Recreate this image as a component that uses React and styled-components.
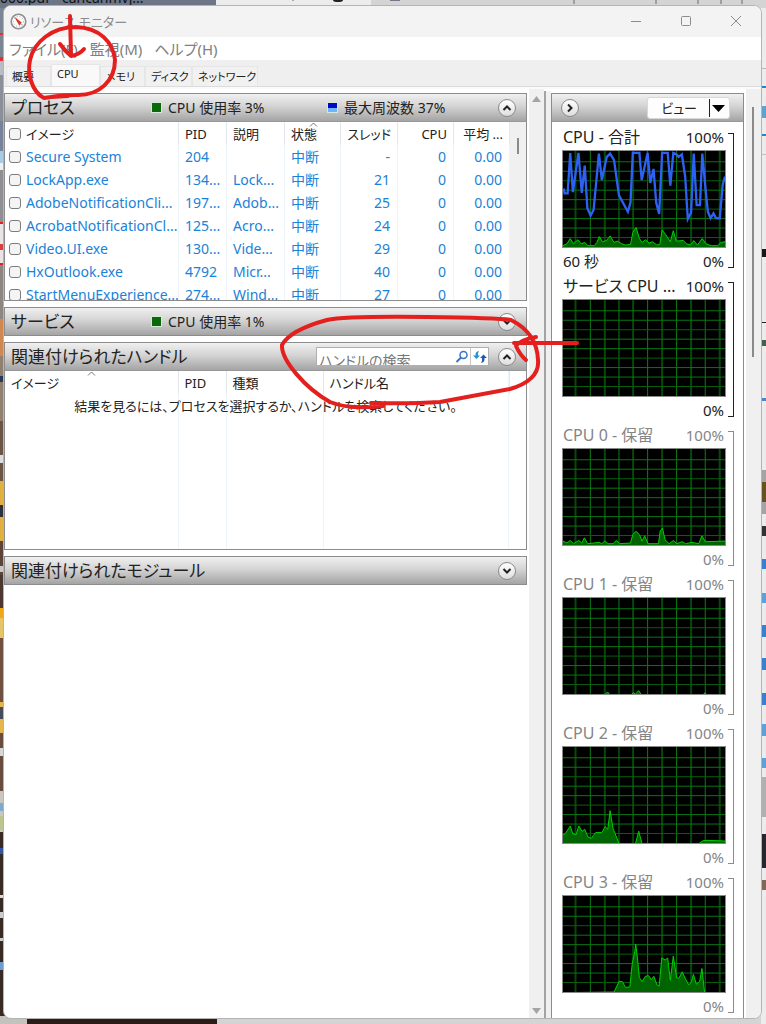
import React, { useState } from 'react';
import styled, { createGlobalStyle } from 'styled-components';

const GlobalStyle = createGlobalStyle`
  * { box-sizing: border-box; }
  body {
    margin: 0;
    overflow: hidden;
    font-family: "Noto Sans", "Noto Sans CJK JP", sans-serif;
    font-size: 13px;
    font-feature-settings: "palt";
    color: #222;
  }
  button, input { font: inherit; color: inherit; font-feature-settings: inherit; }
`;

const Desktop = styled.div`
  position: relative;
  height: 100vh;
  padding: 5px 4px 5px 3px;
  background: #d4d4d4;
`;

const Backdrop = styled.svg`
  position: absolute;
  inset: 0;
  width: 100%;
  height: 100%;
`;

const Markup = styled.svg`
  position: absolute;
  top: 0;
  left: 0;
  pointer-events: none;
`;

const Window = styled.div`
  position: relative;
  height: 100%;
  display: flex;
  flex-direction: column;
  overflow: hidden;
  background: #fff;
  border: 1px solid #b4b4b4;
  border-radius: 8px;
`;

const TitleBar = styled.header`
  display: flex;
  align-items: center;
  flex: none;
  height: 31px;
  padding-left: 6px;
  background: #f3f3f3;
  color: #8c8c8c;
`;

const Title = styled.h1`
  flex: 1;
  margin: 0;
  padding-left: 3px;
  font-size: 13px;
  font-weight: 400;
`;

const WindowButton = styled.button`
  width: 50px;
  height: 30px;
  padding: 0;
  border: 0;
  background: none;
  color: #8c8c8c;
`;

const MenuBar = styled.nav`
  display: flex;
  align-items: center;
  flex: none;
  height: 23px;
  padding-left: 5px;
  gap: 12px;
`;

const MenuItem = styled.button`
  padding: 0;
  border: 0;
  background: none;
  font-size: 15px;
  line-height: 22px;
  color: #808080;
`;

const TabBar = styled.div`
  display: flex;
  align-items: flex-end;
  flex: none;
  height: 26px;
  padding-left: 2px;
  background: #efefef;
`;

const Tab = styled.button`
  min-width: ${p => p.$width}px;
  height: ${p => (p.$active ? 22 : 20)}px;
  padding: 0 0 ${p => (p.$active ? 4 : 0)}px 5px;
  border: 1px solid #e6e6e6;
  border-bottom: 0;
  background: ${p => (p.$active ? '#f9f9f9' : '#f1f1f1')};
  font-size: 11px;
  line-height: 18px;
  text-align: left;
`;

const TabEdge = styled.div`
  flex: none;
  height: 3px;
  border-top: 1px solid #dcdcdc;
  background: #fafafa;
`;

const Main = styled.main`
  display: flex;
  flex: 1;
  min-height: 0;
`;

const Sections = styled.div`
  flex: 1;
  min-width: 0;
  padding: 4px 2px 0 0;
  display: flex;
  flex-direction: column;
  gap: 6px;
`;

const Section = styled.section`
  border: 1px solid #8c8c8c;
`;

const SectionHeader = styled.div`
  display: grid;
  grid-template-columns: ${p => (p.$wide ? '1fr' : '140px 176px 1fr')} auto;
  align-items: center;
  height: 27px;
  padding: 0 10px 0 6px;
  background: linear-gradient(#f0f0f0, #d4d4d4 45%, #a4a4a4);
`;

const SectionTitle = styled.h2`
  margin: 0;
  font-size: 17px;
  line-height: 26px;
  font-weight: 400;
  white-space: nowrap;
`;

const Meter = styled.span`
  display: flex;
  align-items: center;
  gap: 6px;
  font-size: 14px;
  line-height: 20px;
  white-space: nowrap;
`;

const Swatch = styled.i`
  width: 11px;
  height: 11px;
  border: 1px solid #d8e8d8;
  background: ${p => (p.$blue ? 'linear-gradient(#0008c8 60%, #6cb4ff 60%)' : '#0a6a0a')};
`;

const RoundButton = styled.button`
  display: flex;
  align-items: center;
  justify-content: center;
  width: 18px;
  height: 18px;
  padding: 0;
  border: 1px solid #8a8a8a;
  border-radius: 50%;
  background: linear-gradient(#fff, #dedede);
  grid-column: -2;
`;

const SectionBody = styled.div`
  display: flex;
  height: 179px;
  overflow: hidden;
  border-top: 1px solid #999;
`;

const Table = styled.table`
  flex: 1;
  min-width: 0;
  width: 100%;
  table-layout: fixed;
  border-collapse: collapse;
`;

const Th = styled.th`
  position: relative;
  height: 23px;
  padding: 0 6px;
  border-right: 1px solid #e4e8ec;
  font-weight: 400;
  text-align: ${p => (p.$right ? 'right' : 'left')};
  white-space: nowrap;
`;

const Td = styled.td`
  height: 23px;
  padding: 0 7px 0 6px;
  border-right: 1px solid #edf4fa;
  color: #1a82d8;
  font-size: 14px;
  line-height: 20px;
  text-align: ${p => (p.$right ? 'right' : 'left')};
  white-space: nowrap;
  overflow: hidden;
`;

const CheckLabel = styled.label`
  display: flex;
  align-items: center;
  gap: 5px;
  margin: 0 -7px 0 -2px;
  line-height: 20px;
`;

const Check = styled.input`
  appearance: none;
  flex: none;
  width: 12px;
  height: 12px;
  margin: 0;
  border: 1px solid #7c7c7c;
  border-radius: 3px;
  background: #f4f4f4;
  &:checked { background: #1a82d8; }
`;

const SortMark = styled.svg`
  position: absolute;
  top: 0;
  left: 50%;
  margin-left: -4px;
`;

const ListScroll = styled.div`
  flex: none;
  width: 16px;
  padding: 16px 7px;
  background: #f0f0f0;
`;

const Thumb = styled.div`
  width: 2px;
  height: ${p => p.$height}px;
  background: #8a8a8a;
`;

const HandleBody = styled(SectionBody)`
  background:
    linear-gradient(#edf4fa, #edf4fa) calc(100% - 347px) 0 / 1px 100% no-repeat,
    linear-gradient(#edf4fa, #edf4fa) calc(100% - 299px) 0 / 1px 100% no-repeat,
    linear-gradient(#edf4fa, #edf4fa) calc(100% - 202px) 0 / 1px 100% no-repeat,
    linear-gradient(#edf4fa, #edf4fa) calc(100% - 17px) 0 / 1px 100% no-repeat;
  align-items: flex-start;
`;

const Message = styled.td`
  height: 22px;
  padding: 0;
  text-align: center;
  white-space: nowrap;
`;

const Tools = styled.div`
  display: flex;
  align-items: center;
`;

const SearchBox = styled.div`
  display: flex;
  align-items: flex-start;
  width: 173px;
  height: 19px;
  margin-right: 9px;
  overflow: hidden;
  border: 1px solid #b0b0b0;
  background: #fff;
`;

const SearchInput = styled.input`
  flex: 1;
  min-width: 0;
  height: 24px;
  padding: 0 2px;
  border: 0;
  outline: 0;
  background: none;
  font-size: 14px;
  &::placeholder { color: #777; opacity: 1; }
`;

const SearchButton = styled.button`
  width: 18px;
  height: 17px;
  padding: 0;
  border: 0;
  border-left: 1px solid ${p => (p.$divided ? '#c8c8c8' : 'transparent')};
  background: none;
  line-height: 0;
`;

const Gutter = styled.div`
  flex: none;
  display: flex;
  flex-direction: column;
  align-items: center;
  justify-content: space-between;
  width: 15px;
  padding: 7px 0 4px;
  background: #f0f0f0;
`;

const Splitter = styled.div`
  flex: none;
  width: 7px;
  margin-top: 2px;
  border-left: 2px solid #a4a4a4;
  background: #f0f0f0;
`;

const Graphs = styled.aside`
  flex: none;
  width: 193px;
  margin: 4px 2px 0 0;
  overflow: hidden;
  border: 1px solid #8c8c8c;
  border-bottom: 0;
`;

const GraphsHeader = styled.div`
  display: flex;
  align-items: center;
  justify-content: space-between;
  height: 28px;
  padding: 0 13px 0 9px;
  border-bottom: 1px solid #999;
  background: linear-gradient(#f0f0f0, #d4d4d4 45%, #a4a4a4);
`;

const ViewButton = styled.button`
  display: flex;
  align-items: center;
  height: 22px;
  padding: 0 3px 0 13px;
  border: 1px solid #d8d8d8;
  border-radius: 3px;
  background: #fdfdfd;
  svg { margin-left: 11px; }
`;

const GraphList = styled.div`
  padding: 2px 9px 0 10px;
`;

const Graph = styled.figure`
  display: grid;
  grid-template-columns: 1fr 6px;
  column-gap: 2px;
  height: 149px;
  margin: 0;
  color: ${p => (p.$parked ? '#858585' : '#222')};
`;

const GraphCaption = styled.figcaption`
  display: flex;
  justify-content: space-between;
  padding: 0 2px 0 1px;
  font-size: 15px;
  line-height: 26px;
  white-space: nowrap;
`;

const GraphName = styled.span`
  font-size: 16px;
`;

const GraphFoot = styled.div`
  display: flex;
  justify-content: space-between;
  padding: 0 2px 0 1px;
  font-size: 15px;
  line-height: 26px;
`;

const Plot = styled.svg`
  display: block;
  width: 100%;
  height: 98px;
  border: 1px solid #8a8a8a;
  background: #000;
`;

const Bracket = styled.div`
  margin: 9px 0 6px;
  border: 1px solid ${p => (p.$parked ? '#8c8c8c' : '#222')};
  border-left: 0;
`;

const SideScroll = styled.div`
  flex: none;
  width: 15px;
  padding: 18px 6px;
  background: #f0f0f0;
`;

const tabs = [
  { name: '概要', width: 45 },
  { name: 'CPU', width: 49 },
  { name: 'メモリ', width: 45 },
  { name: 'ディスク', width: 47 },
  { name: 'ネットワーク', width: 66 },
];

const processes = [
  ['Secure System', '204', '', '-'],
  ['LockApp.exe', '134...', 'Lock...', '21'],
  ['AdobeNotificationCli...', '197...', 'Adob...', '25'],
  ['AcrobatNotificationCl...', '125...', 'Acro...', '24'],
  ['Video.UI.exe', '130...', 'Vide...', '29'],
  ['HxOutlook.exe', '4792', 'Micr...', '40'],
  ['StartMenuExperience...', '274...', 'Wind...', '27'],
];

const frequency =
  '2,115 5,130 14,130 22,6 30,126 47,6 57,128 66,45 74,175 84,198 93,180 109,8 118,89 133,18 143,8 155,28 170,136 197,186 205,158 212,6 232,6 239,89 257,6 265,98 275,55 283,158 292,193 301,6 318,6 326,106 335,6 344,10 351,18 361,10 371,78 379,208 389,188 397,8 406,166 416,166 423,8 435,138 440,186 448,206 457,191 465,206 476,206 485,103 492,78';

const graphs = [
  {
    name: 'CPU - 合計',
    foot: '60 秒',
    line: frequency,
    area: '0,290 12,284 22,268 32,284 45,272 55,284 66,280 75,290 95,290 103,280 110,262 120,278 132,274 143,260 155,280 165,276 178,284 190,288 205,286 212,250 222,234 232,268 240,280 250,272 262,282 272,278 285,288 294,286 301,242 312,256 326,278 335,244 344,276 365,274 375,284 388,288 397,274 408,288 423,268 434,284 450,290 470,290 480,280 492,278',
  },
  { name: 'サービス CPU ...', area: '' },
  {
    name: 'CPU 0 - 保留',
    parked: true,
    area: '0,282 12,288 22,280 32,290 48,280 57,288 65,272 75,290 110,286 118,290 127,282 137,290 152,290 162,280 172,290 205,288 212,262 222,252 232,262 240,282 248,266 258,290 290,290 295,252 302,242 310,278 322,290 336,280 345,290 362,284 372,290 392,286 412,290 422,266 432,284 492,282',
  },
  {
    name: 'CPU 1 - 保留',
    parked: true,
    area: '0,296 128,296 132,290 138,290 141,296 208,296 213,290 220,294 230,284 238,296 426,296 431,290 436,296 492,296',
  },
  {
    name: 'CPU 2 - 保留',
    parked: true,
    area: '0,270 8,264 22,242 30,266 40,268 48,242 58,258 66,252 76,276 86,280 94,268 100,262 118,262 128,244 136,252 143,195 152,250 158,264 170,296 220,296 230,258 240,296 413,296 425,287 440,286 492,288',
  },
  {
    name: 'CPU 3 - 保留',
    parked: true,
    area: '0,296 155,294 170,262 180,262 190,280 203,278 210,210 218,170 221,148 226,190 232,250 240,262 250,246 260,244 268,256 276,246 285,272 292,276 300,190 310,196 318,190 326,258 335,184 345,250 352,252 362,232 372,254 382,272 390,264 396,240 405,270 415,262 422,222 430,296 492,296',
  },
];

const gridX = [38, 83, 127, 170, 213, 257, 301, 345, 389, 432, 476];
const gridY = [33, 62, 91, 120, 149, 178, 207, 236, 265];

// blocks of the desktop that show at the left edge: [y, height, colour]
const leftEdge = [
  [8, 67, '#7c8594'], [33, 2, '#e03030'], [57, 4, '#e03030'], [61, 14, '#b8bcc4'], [75, 46, '#8a8f99'],
  [121, 30, '#76839a'], [151, 12, '#a8cbe6'], [163, 7, '#f0f0f0'], [170, 52, '#8f8f93'], [222, 43, '#e8e4e4'],
  [222, 2, '#e02020'], [244, 6, '#d84040'], [263, 2, '#e02020'], [265, 54, '#8e8781'], [319, 37, '#d08850'],
  [356, 65, '#8f8070'], [376, 6, '#2a3a58'], [421, 60, '#6a5446'], [455, 8, '#ddd'], [481, 60, '#e0b040'],
  [505, 12, '#30303a'], [541, 34, '#5c4438'], [566, 6, '#c8c8c8'], [575, 33, '#4c3830'], [608, 10, '#f0a818'],
  [618, 20, '#e8c468'], [638, 64, '#705040'], [702, 31, '#e4b64c'], [707, 12, '#464c5c'], [733, 58, '#6a4c3e'],
  [748, 8, '#d8d8d8'], [791, 41, '#c8c8c0'], [803, 8, '#7caac8'], [816, 14, '#bcc68c'], [832, 186, '#3a2a24'],
  [848, 6, '#3456a0'], [895, 3, '#d8d8d8'], [912, 6, '#ccc'], [938, 3, '#ccc'], [962, 8, '#6c9cd0'],
];

const rightEdge = [
  [8, 1016, '#ececec'], [68, 1, '#b8b8b8'], [86, 2, '#1c88c8'], [106, 12, '#58a4d4'], [134, 2, '#1c88c8'],
  [154, 1, '#c0c0c0'], [249, 8, '#181818'], [322, 1, '#222'], [340, 6, '#406050'], [398, 3, '#4a86d0'],
  [470, 44, '#a4a4a4'], [482, 20, '#685020'], [526, 10, '#333'], [559, 10, '#3a80d0'], [593, 10, '#60a0d8'],
  [625, 12, '#3a80d0'], [658, 12, '#3a80d0'], [693, 12, '#3a80d0'], [724, 12, '#60a0d8'], [758, 10, '#60a0d8'],
  [777, 40, '#b0b0b0'], [834, 34, '#26262e'], [880, 10, '#806858'],
];

function Chevron({ direction }) {
  const turn = { up: 0, right: 90, down: 180 }[direction];
  return (
    <svg width="12" height="12" viewBox="0 0 12 12">
      <path d="M2.5 8 6 4.5 9.5 8" fill="none" stroke="#222" strokeWidth="2" transform={`rotate(${turn} 6 6)`} />
    </svg>
  );
}

function SortArrow() {
  return (
    <SortMark width="9" height="5" viewBox="0 0 9 5">
      <path d="M1 4.5 4.5 1 8 4.5" fill="none" stroke="#777" />
    </SortMark>
  );
}

function AppIcon() {
  return (
    <svg width="17" height="17" viewBox="0 0 17 17">
      <circle cx="8.5" cy="8.5" r="7.3" fill="#fafafa" stroke="#8e8e8e" strokeWidth="1.6" />
      <circle cx="8.5" cy="8.5" r="5" fill="none" stroke="#aaa" strokeDasharray="1 2" />
      <path d="M4.2 3.4 11.8 9.8 9.2 12.4Z" fill="#d83020" />
      <path d="M10 10.5 12 12.5" stroke="#999" />
    </svg>
  );
}

function UsageGraph({ graph }) {
  return (
    <Graph $parked={graph.parked}>
      <div>
        <GraphCaption>
          <GraphName>{graph.name}</GraphName>
          <span>100%</span>
        </GraphCaption>
        <Plot viewBox="0 0 492 294" preserveAspectRatio="none">
          {gridX.map((x, i) => (
            <path key={x} d={`M${x} 0V294`} stroke={i % 2 ? '#0a8214' : '#064a0a'} strokeWidth={i % 2 ? 3 : 6} />
          ))}
          {gridY.map((y, i) => (
            <path key={y} d={`M0 ${y}H492`} stroke={i % 3 === 2 ? '#08600e' : '#0a7812'} strokeWidth="3" />
          ))}
          {graph.area && <polygon points={`0,300 ${graph.area} 492,300`} fill="#006400" />}
          {graph.area && <polyline points={graph.area} fill="none" stroke="#00d200" strokeWidth="3" />}
          {graph.line && <polyline points={graph.line} fill="none" stroke="#2c62f4" strokeWidth="7" />}
        </Plot>
        <GraphFoot>
          <span>{graph.foot}</span>
          <span>0%</span>
        </GraphFoot>
      </div>
      <Bracket $parked={graph.parked} />
    </Graph>
  );
}

function ProcessTable() {
  return (
    <Table>
      <colgroup>
        <col />
        <col width="48" />
        <col width="58" />
        <col width="56" />
        <col width="57" />
        <col width="56" />
        <col width="56" />
      </colgroup>
      <thead>
        <tr>
          <Th><CheckLabel><Check type="checkbox" />イメージ</CheckLabel></Th>
          <Th>PID</Th>
          <Th>説明</Th>
          <Th>状態<SortArrow /></Th>
          <Th $right>スレッド</Th>
          <Th $right>CPU</Th>
          <Th $right>平均 ...</Th>
        </tr>
      </thead>
      <tbody>
        {processes.map(([name, pid, description, threads]) => (
          <tr key={name}>
            <Td><CheckLabel><Check type="checkbox" />{name}</CheckLabel></Td>
            <Td>{pid}</Td>
            <Td>{description}</Td>
            <Td>中断</Td>
            <Td $right>{threads}</Td>
            <Td $right>0</Td>
            <Td $right>0.00</Td>
          </tr>
        ))}
      </tbody>
    </Table>
  );
}

function HandleTable() {
  return (
    <Table>
      <colgroup>
        <col />
        <col width="48" />
        <col width="97" />
        <col width="186" />
        <col width="17" />
      </colgroup>
      <thead>
        <tr>
          <Th>イメージ<SortArrow /></Th>
          <Th>PID</Th>
          <Th>種類</Th>
          <Th>ハンドル名</Th>
          <td />
        </tr>
      </thead>
      <tbody>
        <tr>
          <Message colSpan={5}>結果を見るには、プロセスを選択するか、ハンドルを検索してください。</Message>
        </tr>
      </tbody>
    </Table>
  );
}

function HandleTools({ query, onChange }) {
  return (
    <Tools>
      <SearchBox>
        <SearchInput
          aria-label="ハンドルの検索"
          placeholder="ハンドルの検索"
          value={query}
          onChange={e => onChange(e.target.value)}
        />
        <SearchButton aria-label="検索">
          <svg width="14" height="14" viewBox="0 0 14 14" fill="none">
            <circle cx="8.5" cy="5" r="3.5" stroke="#3a74c4" strokeWidth="1.5" />
            <path d="M6 7.5 1.5 12" stroke="#3a74c4" strokeWidth="2" />
          </svg>
        </SearchButton>
        <SearchButton $divided aria-label="更新">
          <svg width="14" height="14" viewBox="0 0 14 14">
            <path d="M0 5.5h2.5Q2 1.5 6 1 4.5 3 5 5.5H7L3.5 9Z" fill="#2e90d4" />
            <path d="M14 8h-2.5Q12 12.500 8 13 9.500 11 9 8H7l3.500-3.500Z" fill="#2458b0" />
          </svg>
        </SearchButton>
      </SearchBox>
      <RoundButton aria-label="折りたたむ"><Chevron direction="up" /></RoundButton>
    </Tools>
  );
}

function App() {
  const [activeTab, setActiveTab] = useState('CPU');
  const [query, setQuery] = useState('');

  return (
    <Desktop>
      <GlobalStyle />
      <Backdrop>
        <rect width="216" height="8" fill="#6c7686" />
        <rect x="216" width="155" height="8" fill="#ececec" />
        <text x="0" y="3" fontSize="14" fill="#111">000.pdf</text>
        <text x="62" y="3" fontSize="14" fill="#111">cancanmvj...</text>
        <path d="M293 0v1M574 0v4M656 0v4M698 0v4M721 0v4M742 0v4" stroke="#667" />
        <ellipse cx="338" cy="0" rx="5" ry="2" fill="#222" />
        <rect x="390" width="10" height="1" fill="#778" />
        <svg x="0" width="10">
          {leftEdge.map(([y, h, fill]) => <rect key={`${y}-${h}`} y={y} width="10" height={h} fill={fill} />)}
        </svg>
        <svg x="100%" overflow="visible">
          {rightEdge.map(([y, h, fill]) => <rect key={`${y}-${h}`} x="-5" y={y} width="5" height={h} fill={fill} />)}
        </svg>
        <svg y="100%" overflow="visible">
          <rect y="-8" width="27" height="8" fill="#c4c2bc" />
          <rect x="27" y="-8" width="190" height="8" fill="#2c1c18" />
        </svg>
      </Backdrop>

      <Window>
        <TitleBar>
          <AppIcon />
          <Title>リソース モニター</Title>
          <WindowButton aria-label="最小化">
            <svg width="12" height="12"><path d="M1 6.5h10" stroke="currentColor" /></svg>
          </WindowButton>
          <WindowButton aria-label="最大化">
            <svg width="12" height="12"><rect x="1.5" y="1.5" width="9" height="9" rx="1" fill="none" stroke="currentColor" /></svg>
          </WindowButton>
          <WindowButton aria-label="閉じる">
            <svg width="12" height="12"><path d="m1 1 10 10M11 1 1 11" stroke="currentColor" /></svg>
          </WindowButton>
        </TitleBar>

        <MenuBar>
          <MenuItem>ファイル(F)</MenuItem>
          <MenuItem>監視(M)</MenuItem>
          <MenuItem>ヘルプ(H)</MenuItem>
        </MenuBar>

        <TabBar role="tablist">
          {tabs.map(tab => (
            <Tab
              key={tab.name}
              role="tab"
              aria-selected={tab.name === activeTab}
              $active={tab.name === activeTab}
              $width={tab.width}
              onClick={() => setActiveTab(tab.name)}
            >
              {tab.name}
            </Tab>
          ))}
        </TabBar>
        <TabEdge />

        <Main>
          <Sections>
            <Section>
              <SectionHeader>
                <SectionTitle>プロセス</SectionTitle>
                <Meter><Swatch />CPU 使用率 3%</Meter>
                <Meter><Swatch $blue />最大周波数 37%</Meter>
                <RoundButton aria-label="折りたたむ"><Chevron direction="up" /></RoundButton>
              </SectionHeader>
              <SectionBody>
                <ProcessTable />
                <ListScroll><Thumb $height={16} /></ListScroll>
              </SectionBody>
            </Section>

            <Section>
              <SectionHeader>
                <SectionTitle>サービス</SectionTitle>
                <Meter><Swatch />CPU 使用率 1%</Meter>
                <RoundButton aria-label="展開"><Chevron direction="down" /></RoundButton>
              </SectionHeader>
            </Section>

            <Section>
              <SectionHeader $wide>
                <SectionTitle>関連付けられたハンドル</SectionTitle>
                <HandleTools query={query} onChange={setQuery} />
              </SectionHeader>
              <HandleBody>
                <HandleTable />
              </HandleBody>
            </Section>

            <Section>
              <SectionHeader $wide>
                <SectionTitle>関連付けられたモジュール</SectionTitle>
                <RoundButton aria-label="展開"><Chevron direction="down" /></RoundButton>
              </SectionHeader>
            </Section>
          </Sections>

          <Gutter>
            <svg width="9" height="6"><path d="M0 6 4.5 0 9 6Z" fill="#a4a4a4" /></svg>
            <svg width="9" height="6"><path d="M0 0h9L4.5 6Z" fill="#a4a4a4" /></svg>
          </Gutter>
          <Splitter />

          <Graphs>
            <GraphsHeader>
              <RoundButton aria-label="グラフを隠す"><Chevron direction="right" /></RoundButton>
              <ViewButton>
                ビュー
                <svg width="18" height="18">
                  <path d="M1.5 0v18" stroke="#222" />
                  <path d="M4 6h13l-6.5 7Z" fill="#000" />
                </svg>
              </ViewButton>
            </GraphsHeader>
            <GraphList>
              {graphs.map(graph => <UsageGraph key={graph.name} graph={graph} />)}
            </GraphList>
          </Graphs>
          <SideScroll><Thumb $height={250} /></SideScroll>
        </Main>
      </Window>

      <Markup width="766" height="1024" fill="none" stroke="#e4201e" strokeWidth="4" strokeLinecap="round" strokeLinejoin="round">
        <path d="M70 16 71 55M60 44 Q65 51 71 56 Q79 55 84 49" />
        <path d="M68 96 51 97 44 98 C32 92 27 74 30 60 C34 42 52 27 76 27 C100 28 113 42 115 60 C115 80 100 96 76 95 C64 95 56 96 51 97" />
        <path d="M371 403 Q410 404 440 402 L510 389 Q540 380 538 360 Q537 333 511 320 Q500 318 427 317 Q345 316 327 320 Q290 330 282 345 C281 360 305 388 330 402 Q350 410 383 406" />
        <path d="M577 343H514M536 337Q520 340 516 346 Q520 355 526 360" />
      </Markup>
    </Desktop>
  );
}

export default App;
